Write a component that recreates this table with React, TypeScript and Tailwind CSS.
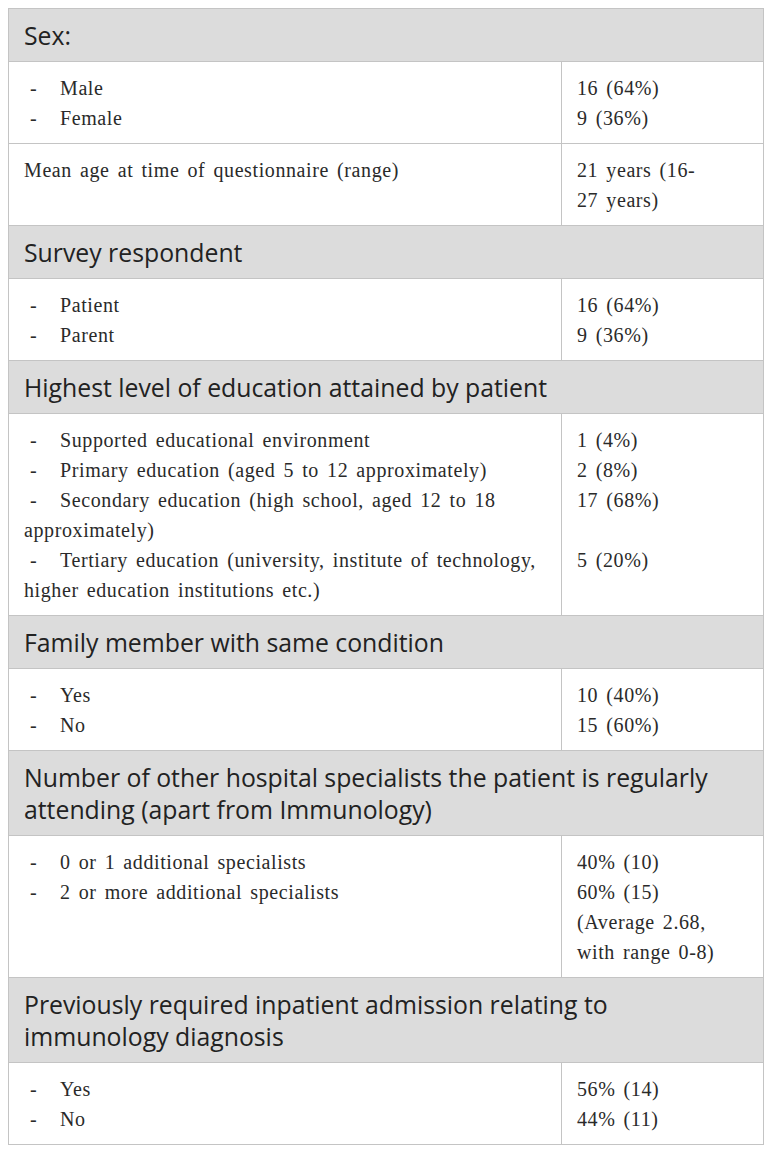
import React from "react";

const H = ({ children }: { children: React.ReactNode }) => (
  <tr>
    <td
      colSpan={2}
      className="bg-[#dcdcdc] border border-[#c4c4c4] px-[15px] pt-[10px] pb-[10px] text-[24.8px] leading-[32px] tracking-normal [word-spacing:0px] text-[#222] [font-family:'Open_Sans',sans-serif]"
    >
      {children}
    </td>
  </tr>
);

const D = () => <span className="inline-block w-[36px] pl-[6px] [word-spacing:0px]">-</span>;

const B = ({ left, right }: { left: React.ReactNode; right: React.ReactNode }) => (
  <tr className="align-top">
    <td className="border border-[#c4c4c4] px-[15px] pt-[11px] pb-[10px]">{left}</td>
    <td className="border border-[#c4c4c4] px-[15px] pt-[11px] pb-[10px] w-[202px] whitespace-nowrap">{right}</td>
  </tr>
);

export default function App() {
  return (
    <div className="bg-white min-h-[1153px] p-2">
      <table className="w-[756px] border-collapse text-[20px] leading-[30px] tracking-[0.6px] [word-spacing:2.5px] text-[#2a2a2a] [font-family:'Liberation_Serif',serif]">
        <tbody>
          <H>Sex:</H>
          <B
            left={
              <>
                <D />Male<br />
                <D />Female
              </>
            }
            right={
              <>
                16 (64%)<br />9 (36%)
              </>
            }
          />
          <B
            left={<>Mean age at time of questionnaire (range)</>}
            right={
              <>
                21 years (16-<br />27 years)
              </>
            }
          />
          <H>Survey respondent</H>
          <B
            left={
              <>
                <D />Patient<br />
                <D />Parent
              </>
            }
            right={
              <>
                16 (64%)<br />9 (36%)
              </>
            }
          />
          <H>Highest level of education attained by patient</H>
          <B
            left={
              <>
                <D />Supported educational environment<br />
                <D />Primary education (aged 5 to 12 approximately)<br />
                <D />Secondary education (high school, aged 12 to 18<br />
                approximately)<br />
                <D />Tertiary education (university, institute of technology,<br />
                higher education institutions etc.)
              </>
            }
            right={
              <>
                1 (4%)<br />2 (8%)<br />17 (68%)<br />
                <br />5 (20%)
              </>
            }
          />
          <H>Family member with same condition</H>
          <B
            left={
              <>
                <D />Yes<br />
                <D />No
              </>
            }
            right={
              <>
                10 (40%)<br />15 (60%)
              </>
            }
          />
          <H>
            Number of other hospital specialists the patient is regularly
            <br />
            attending (apart from Immunology)
          </H>
          <B
            left={
              <>
                <D />0 or 1 additional specialists<br />
                <D />2 or more additional specialists
              </>
            }
            right={
              <>
                40% (10)<br />60% (15)<br />(Average 2.68,<br />with range 0-8)
              </>
            }
          />
          <H>
            Previously required inpatient admission relating to
            <br />
            immunology diagnosis
          </H>
          <B
            left={
              <>
                <D />Yes<br />
                <D />No
              </>
            }
            right={
              <>
                56% (14)<br />44% (11)
              </>
            }
          />
        </tbody>
      </table>
    </div>
  );
}
